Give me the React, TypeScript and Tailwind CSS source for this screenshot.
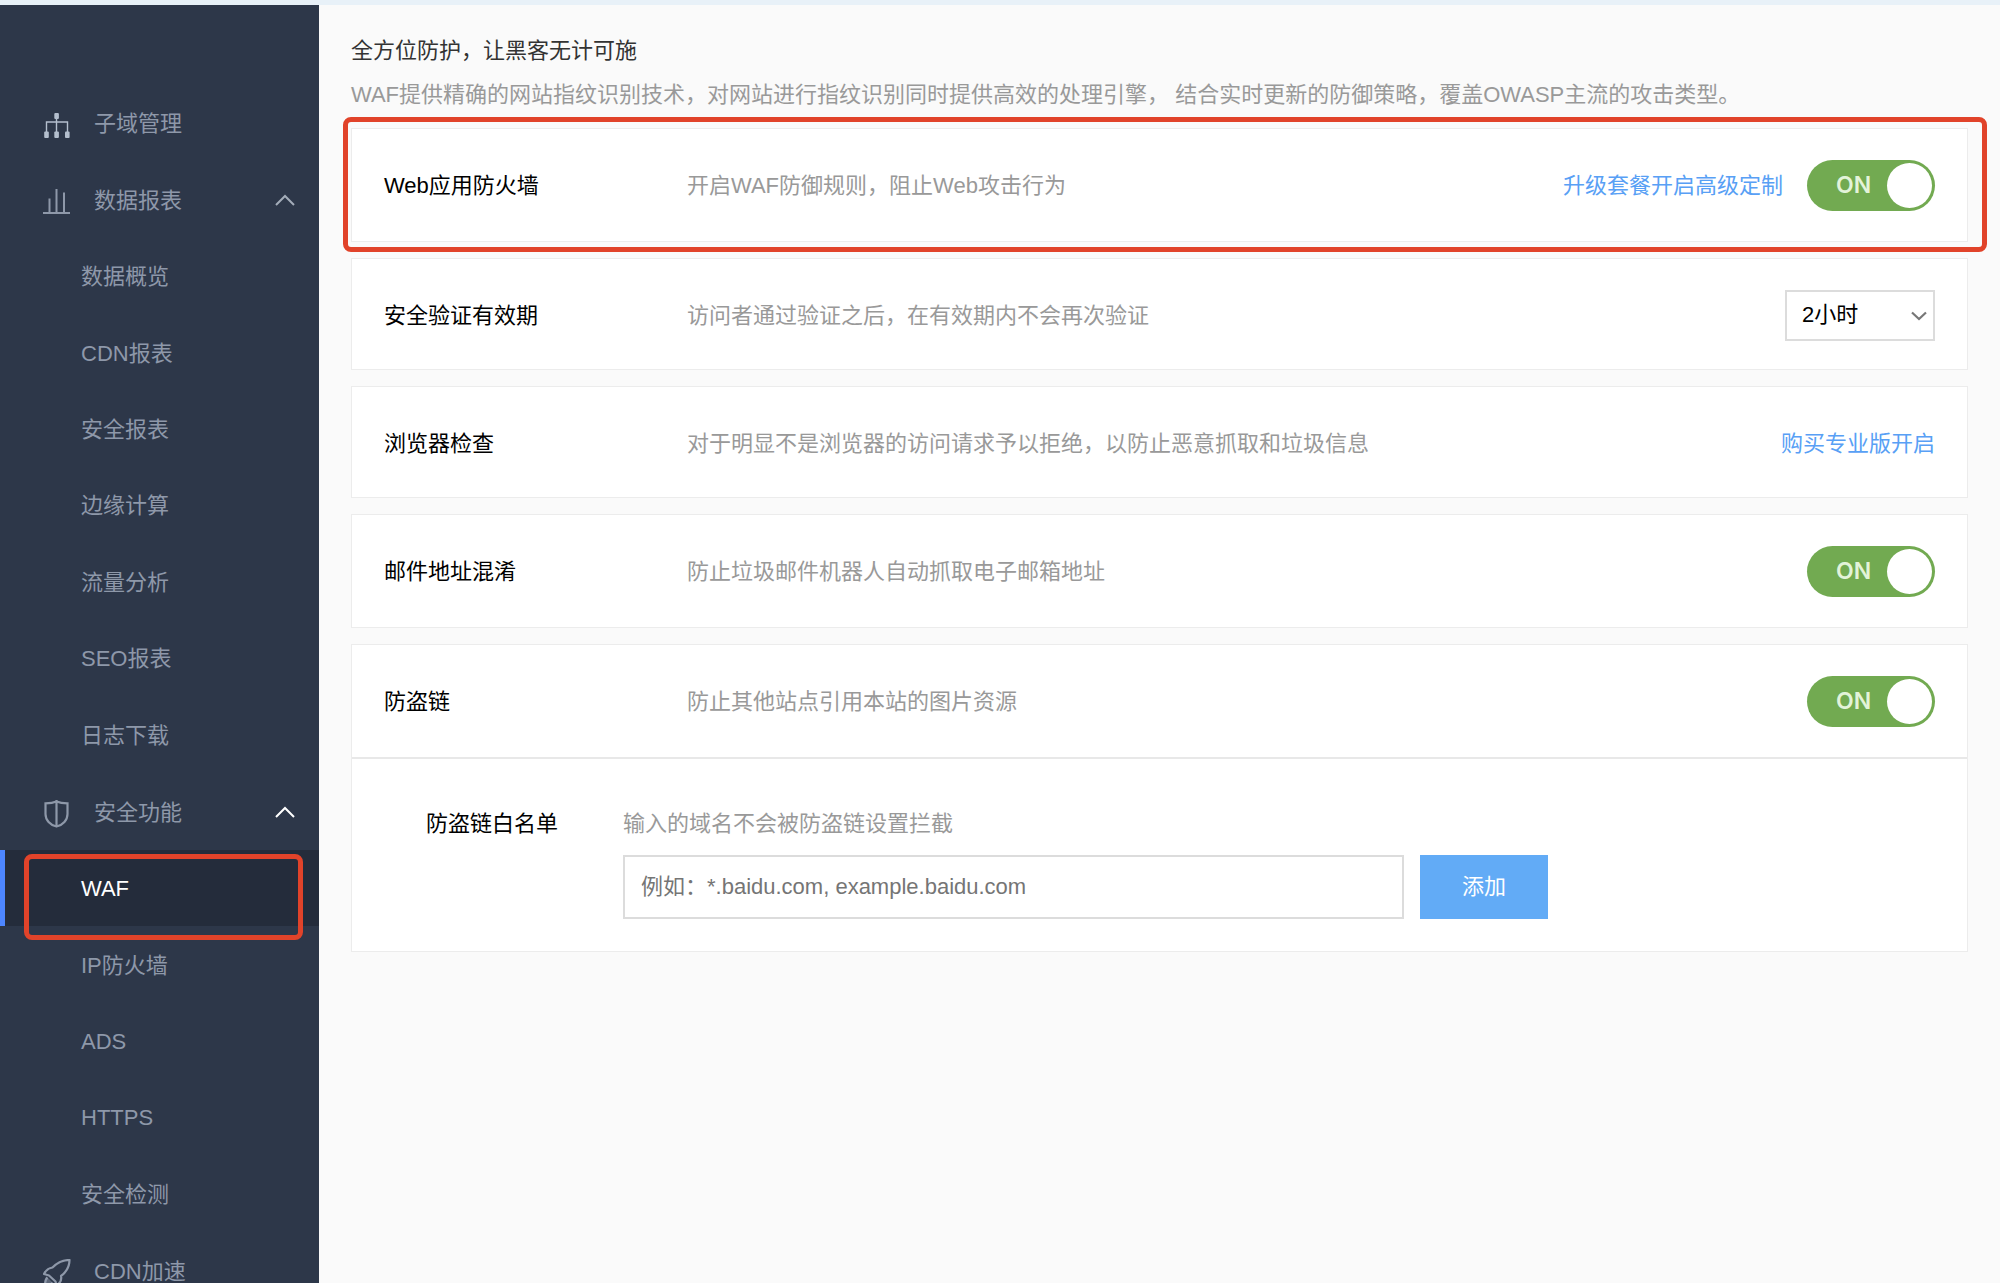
import type { ReactNode } from 'react';

type IconName = 'tree' | 'bars' | 'shield' | 'rocket';

interface NavGroup {
    icon: IconName;
    title: string;
    items?: string[];
    listHeight?: string;
    current?: boolean;
}

const NAV: NavGroup[] = [
    { icon: 'tree', title: '子域管理' },
    {
        icon: 'bars',
        title: '数据报表',
        items: ['数据概览', 'CDN报表', '安全报表', '边缘计算', '流量分析', 'SEO报表', '日志下载'],
        listHeight: 'h-[535px]',
    },
    {
        icon: 'shield',
        title: '安全功能',
        items: ['WAF', 'IP防火墙', 'ADS', 'HTTPS', '安全检测'],
        listHeight: 'h-[382px]',
        current: true,
    },
    { icon: 'rocket', title: 'CDN加速' },
];

const ACTIVE_ITEM = 'WAF';

function NavIcon({ name }: { name: IconName }) {
    return (
        <svg viewBox="0 0 28 28" fill="none" stroke="currentColor" className="mt-1 size-7 shrink-0" aria-hidden="true">
            {name === 'tree' && (
                <g className="text-[#b4bfce]" stroke="currentColor" strokeWidth="1.4">
                    <path d="M13.5 6v16M3.5 22V11h21v11" />
                    <g fill="currentColor" stroke="none">
                        <rect x="11.3" y="2" width="4.6" height="6" rx="1" />
                        <rect x="1.2" y="20.5" width="4.6" height="6.5" rx="1" />
                        <rect x="11.3" y="20.5" width="4.6" height="6.5" rx="1" />
                        <rect x="22" y="20.5" width="4.6" height="6.5" rx="1" />
                    </g>
                </g>
            )}
            {name === 'bars' && <path strokeWidth="2" d="M0 25h27M6.500 25V10.500M13.500 25V1M21 25V4.500" />}
            {name === 'shield' && (
                <path strokeWidth="2.2" d="M13.500 1.500C10.500 2.800 6 3.300 2.500 3.300V14c0 6 4.500 11 11 12.500 6.500-1.500 11-6.500 11-12.500V3.300C21 3.300 16.500 2.800 13.500 1.500zM13.500 0V27" />
            )}
            {name === 'rocket' && (
                <g strokeWidth="2.2" strokeLinejoin="round">
                    <path d="M26.500 1C20 1 14 4 9.500 8.500 6 9 3 11 1 15l5 1.500 6.500 6L13.500 26.500c3.500-2.500 5.500-5.500 4.500-9.500C24 12.500 26.500 8 26.500 1z" />
                    <path fill="currentColor" fillOpacity="0.5" d="M4.500 18.500c-2 1.500-2.500 4.500-2.500 8 3.500 0 6-.500 7.500-3" />
                </g>
            )}
        </svg>
    );
}

function Chevron() {
    return (
        <svg viewBox="0 0 20 12" fill="none" stroke="currentColor" strokeWidth="2" className="w-5 h-3" aria-hidden="true">
            <path d="M1 11L10 2L19 11" />
        </svg>
    );
}

function Sidebar() {
    return (
        <nav className="w-[319px] shrink-0 overflow-hidden bg-[#2d3749] pt-[79px] text-[#8e98a9]">
            {NAV.map((group) => (
                <div key={group.title}>
                    <a href="#" className="flex h-[77px] items-center pl-[43px] pr-6">
                        <NavIcon name={group.icon} />
                        <span className="ml-[23px] flex-1 pt-[2px]">{group.title}</span>
                        {group.items && (
                            <span className={group.current ? 'text-white' : 'text-[#a3acb9]'}>
                                <Chevron />
                            </span>
                        )}
                    </a>
                    {group.items && (
                        <ul className={`grid auto-rows-fr ${group.listHeight}`}>
                            {group.items.map((item) => (
                                <li key={item} className="relative">
                                    {item === ACTIVE_ITEM ? (
                                        <>
                                            <a href="#" aria-current="page" className="flex h-full items-center border-l-5 border-[#4d86ff] bg-[#242c3b] pl-[76px] pt-[2px] text-white">
                                                {item}
                                            </a>
                                            <div className="pointer-events-none absolute -bottom-[14px] left-6 right-4 top-1 rounded-lg border-5 border-[#e1432a]" />
                                        </>
                                    ) : (
                                        <a href="#" className="flex h-full items-center pl-[81px] pt-[2px]">{item}</a>
                                    )}
                                </li>
                            ))}
                        </ul>
                    )}
                </div>
            ))}
        </nav>
    );
}

function Toggle({ label }: { label: string }) {
    return (
        <label className="relative flex h-[51px] w-32 cursor-pointer items-center rounded-full bg-[#72aa51] pl-[29px]">
            <input type="checkbox" defaultChecked aria-label={label} className="peer sr-only" />
            <span className="font-['Inter',sans-serif] text-[23px] font-semibold text-[#e3f3d9]">ON</span>
            <span className="absolute right-[3px] top-[3px] size-[45px] rounded-full bg-white" />
        </label>
    );
}

interface SettingRowProps {
    title: string;
    desc: string;
    size?: string;
    children: ReactNode;
}

function SettingRow({ title, desc, size = 'min-h-[112px]', children }: SettingRowProps) {
    return (
        <div className={`flex items-center px-8 ${size}`}>
            <h2 className="w-[303px] shrink-0 pt-[2px] text-black">{title}</h2>
            <p className="flex-1 pt-[2px] text-[#999]">{desc}</p>
            <div className="flex items-center gap-6">{children}</div>
        </div>
    );
}

const CARD = 'relative border border-[#ececec] bg-white';
const LINK = 'pt-[2px] text-[#58a0f5]';

export default function App() {
    return (
        <div className="flex h-screen flex-col overflow-hidden bg-[#fafafa] font-['Liberation_Sans','Noto_Sans_CJK_SC',sans-serif] text-[22px] leading-[44px]">
            <div className="h-[5px] shrink-0 bg-[#e8f1f8]" />
            <div className="flex min-h-0 flex-1">
                <Sidebar />

                <main className="min-w-0 flex-1 pl-8 pr-8 pt-6">
                    <h1 className="text-[#333]">全方位防护，让黑客无计可施</h1>
                    <p className="text-[#999]">
                        WAF提供精确的网站指纹识别技术，对网站进行指纹识别同时提供高效的处理引擎， 结合实时更新的防御策略，覆盖OWASP主流的攻击类型。
                    </p>

                    <div className="mt-[11px] flex flex-col gap-4">
                        <section className={CARD}>
                            <SettingRow title="Web应用防火墙" desc="开启WAF防御规则，阻止Web攻击行为">
                                <a href="#" className={LINK}>升级套餐开启高级定制</a>
                                <Toggle label="Web应用防火墙" />
                            </SettingRow>
                            <div className="pointer-events-none absolute -bottom-[11px] -left-[9px] -right-5 -top-3 rounded-lg border-5 border-[#e1432a]" />
                        </section>

                        <section className={CARD}>
                            <SettingRow title="安全验证有效期" desc="访问者通过验证之后，在有效期内不会再次验证" size="min-h-[110px] pt-[2px]">
                                <div className="relative">
                                    <select aria-label="安全验证有效期" className="block h-[51px] w-[150px] appearance-none border-2 border-[#dcdcdc] bg-white pl-[15px] text-black">
                                        <option>2小时</option>
                                    </select>
                                    <svg viewBox="0 0 16 10" fill="none" stroke="#777" strokeWidth="2.2" className="pointer-events-none absolute right-2 top-[21px] h-[10px] w-4" aria-hidden="true">
                                        <path d="M1 1.500L8 8L15 1.500" />
                                    </svg>
                                </div>
                            </SettingRow>
                        </section>

                        <section className={CARD}>
                            <SettingRow title="浏览器检查" desc="对于明显不是浏览器的访问请求予以拒绝，以防止恶意抓取和垃圾信息" size="min-h-[110px] pt-[2px]">
                                <a href="#" className={LINK}>购买专业版开启</a>
                            </SettingRow>
                        </section>

                        <section className={CARD}>
                            <SettingRow title="邮件地址混淆" desc="防止垃圾邮件机器人自动抓取电子邮箱地址">
                                <Toggle label="邮件地址混淆" />
                            </SettingRow>
                        </section>

                        <section className={CARD}>
                            <SettingRow title="防盗链" desc="防止其他站点引用本站的图片资源">
                                <Toggle label="防盗链" />
                            </SettingRow>

                            {/* 白名单 */}
                            <div className="flex border-t-2 border-[#e8e8e8] pb-8 pl-[74px] pt-[43px]">
                                <label htmlFor="whitelist" className="w-[197px] shrink-0 text-black">防盗链白名单</label>
                                <div className="flex-1">
                                    <p className="text-[#999]">输入的域名不会被防盗链设置拦截</p>
                                    <div className="mt-[9px] flex gap-4">
                                        <input
                                            id="whitelist"
                                            type="text"
                                            placeholder="例如：*.baidu.com, example.baidu.com"
                                            className="h-16 w-[781px] border-2 border-[#dcdcdc] bg-white px-4 placeholder:text-[#757575]"
                                        />
                                        <button type="button" className="h-16 w-32 bg-[#62abf6] text-white">添加</button>
                                    </div>
                                </div>
                            </div>
                        </section>
                    </div>
                </main>
            </div>
        </div>
    );
}
